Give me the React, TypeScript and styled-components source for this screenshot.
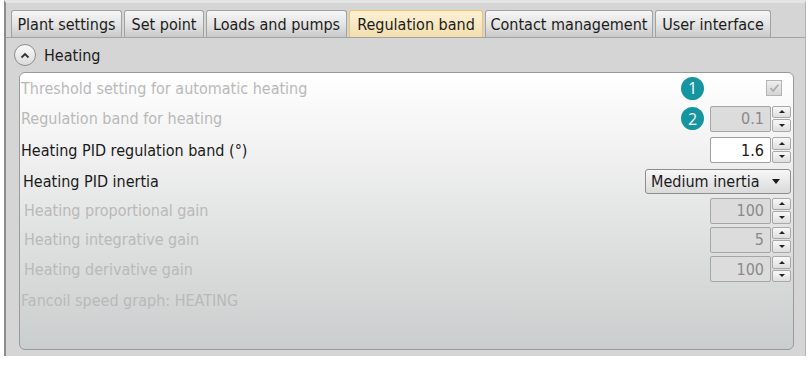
import React from 'react'
import styled, { createGlobalStyle } from 'styled-components'

const Global = createGlobalStyle`
  html, body { margin: 0; padding: 0; background: #ffffff; }
  body { font-family: "DejaVu Sans Condensed", "DejaVu Sans", "Liberation Sans", sans-serif; }
`

const Window = styled.div`
  margin-left: 4px;
  width: 799px;
  height: 353px;
  border-top: 3px solid #e4e4e4;
  border-left: 2px solid #8c8c8c;
  border-right: 1px solid #b4b4b4;
  background: #d5d5d5;
  display: flex;
  flex-direction: column;
`

const TabStrip = styled.div`
  display: flex;
  gap: 2px;
  padding: 7px 0 0 5px;
  height: 27px;
  border-bottom: 1px solid #a3a3a3;
`

const Tab = styled.div<{ $w: number; $active?: boolean }>`
  width: ${p => p.$w}px;
  box-sizing: border-box;
  height: 27px;
  border: 1px solid ${p => (p.$active ? '#efc465' : '#a2a2a2')};
  border-bottom: none;
  border-radius: 3px 3px 0 0;
  background: ${p =>
    p.$active
      ? 'linear-gradient(#fcf1d6, #f3dfae)'
      : 'linear-gradient(#f7f7f7, #e2e2e2 55%, #c9c9c9)'};
  font-size: 16px;
  color: #1c1c1c;
  display: flex;
  align-items: center;
  justify-content: center;
  white-space: nowrap;
`

const Header = styled.div`
  height: 34px;
  display: flex;
  align-items: center;
  padding-left: 8px;
  gap: 8px;
  font-size: 16px;
  color: #1c1c1c;
`

const Collapse = styled.div`
  width: 20px;
  height: 20px;
  border-radius: 50%;
  border: 1px solid #8e8e8e;
  background: linear-gradient(#fafafa, #dcdcdc);
  display: flex;
  align-items: center;
  justify-content: center;
`

const Panel = styled.div`
  margin: 0 11px 6px 13px;
  flex: 1;
  border: 1px solid #9a9a9a;
  border-radius: 6px;
  background: linear-gradient(#ffffff, #f3f3f3 25%, #e2e3e3 55%, #cbcece);
  padding: 0 2px 0 1px;
  display: flex;
  flex-direction: column;
`

const Row = styled.div<{ $h: number }>`
  height: ${p => p.$h}px;
  display: flex;
  align-items: center;
`

const Label = styled.div<{ $on?: boolean; $indent?: number }>`
  flex: 1;
  font-size: 16px;
  padding-left: ${p => p.$indent ?? 0}px;
  color: ${p => (p.$on ? '#1a1a1a' : '#b9b9b9')};
  white-space: nowrap;
`

const Badge = styled.div`
  width: 23px;
  height: 23px;
  border-radius: 50%;
  background: #1495a0;
  color: #ffffff;
  font-family: "Open Sans", "DejaVu Sans", sans-serif;
  font-size: 16px;
  display: flex;
  align-items: center;
  justify-content: center;
  margin-right: 6px;
`

const Control = styled.div`
  width: 81px;
  display: flex;
  justify-content: flex-end;
`

const Check = styled.div`
  width: 14px;
  height: 14px;
  border: 1px solid #b4b4b4;
  background: linear-gradient(#eeeeee, #d4d4d4);
  margin-right: 9px;
  display: flex;
  align-items: center;
  justify-content: center;
`

const Spin = styled.div`
  display: flex;
  gap: 1px;
  width: 81px;
  height: 26px;
`

const SpinText = styled.div<{ $on?: boolean }>`
  flex: 1;
  box-sizing: border-box;
  border: 1px solid ${p => (p.$on ? '#a0a0a0' : '#a6a6a6')};
  border-radius: 2px;
  background: ${p => (p.$on ? '#ffffff' : '#dcdcdc')};
  color: ${p => (p.$on ? '#1a1a1a' : '#8a8a8a')};
  font-size: 16px;
  display: flex;
  align-items: center;
  justify-content: flex-end;
  padding-right: 6px;
`

const SpinBtns = styled.div`
  width: 19px;
  display: flex;
  flex-direction: column;
  gap: 1px;
`

const SpinBtn = styled.div`
  flex: 1;
  border: 1px solid #a9a9a9;
  border-radius: 2px;
  background: linear-gradient(#f8f8f8, #dedede);
  display: flex;
  align-items: center;
  justify-content: center;
`

const Arrow = styled.div<{ $up?: boolean }>`
  width: 0;
  height: 0;
  border-left: 3px solid transparent;
  border-right: 3px solid transparent;
  ${p => (p.$up ? 'border-bottom: 3px solid #222;' : 'border-top: 3px solid #222;')}
`

const Select = styled.div`
  width: 146px;
  height: 25px;
  box-sizing: border-box;
  border: 1px solid #8e8e8e;
  border-radius: 3px;
  background: linear-gradient(#f7f7f7, #dadada);
  font-size: 16px;
  color: #1a1a1a;
  display: flex;
  align-items: center;
  justify-content: space-between;
  padding: 0 10px 0 5px;
  margin-left: auto;
`

const SelectArrow = styled.div`
  width: 0;
  height: 0;
  border-left: 4px solid transparent;
  border-right: 4px solid transparent;
  border-top: 5px solid #1a1a1a;
`

function SpinBox({ value, on }: { value: string; on?: boolean }) {
  return (
    <Spin>
      <SpinText $on={on}>{value}</SpinText>
      <SpinBtns>
        <SpinBtn><Arrow $up /></SpinBtn>
        <SpinBtn><Arrow /></SpinBtn>
      </SpinBtns>
    </Spin>
  )
}

const tabs = [
  { t: 'Plant settings', w: 111 },
  { t: 'Set point', w: 80 },
  { t: 'Loads and pumps', w: 141 },
  { t: 'Regulation band', w: 134, a: true },
  { t: 'Contact management', w: 168 },
  { t: 'User interface', w: 116 },
]

export default function App() {
  return (
    <>
      <Global />
      <Window>
        <TabStrip>
          {tabs.map(x => (
            <Tab key={x.t} $w={x.w} $active={x.a}>{x.t}</Tab>
          ))}
        </TabStrip>
        <Header>
          <Collapse>
            <svg width="10" height="7" viewBox="0 0 10 7">
              <path d="M1.5 5.5 L5 2 L8.5 5.5" fill="none" stroke="#333" strokeWidth="1.8" />
            </svg>
          </Collapse>
          Heating
        </Header>
        <Panel>
          <Row $h={30}>
            <Label>Threshold setting for automatic heating</Label>
            <Badge>1</Badge>
            <Control>
              <Check>
                <svg width="11" height="10" viewBox="0 0 11 10">
                  <path d="M1.5 5 L4.2 8 L9.5 1.5" fill="none" stroke="#a9a9a9" strokeWidth="1.6" />
                </svg>
              </Check>
            </Control>
          </Row>
          <Row $h={31}>
            <Label>Regulation band for heating</Label>
            <Badge>2</Badge>
            <Control><SpinBox value="0.1" /></Control>
          </Row>
          <Row $h={32}>
            <Label $on>Heating PID regulation band (°)</Label>
            <Control><SpinBox value="1.6" on /></Control>
          </Row>
          <Row $h={30}>
            <Label $on $indent={2}>Heating PID inertia</Label>
            <Select>
              Medium inertia
              <SelectArrow />
            </Select>
          </Row>
          <Row $h={29}>
            <Label $indent={3}>Heating proportional gain</Label>
            <Control><SpinBox value="100" /></Control>
          </Row>
          <Row $h={29}>
            <Label $indent={3}>Heating integrative gain</Label>
            <Control><SpinBox value="5" /></Control>
          </Row>
          <Row $h={30}>
            <Label $indent={3}>Heating derivative gain</Label>
            <Control><SpinBox value="100" /></Control>
          </Row>
          <Row $h={32}>
            <Label>Fancoil speed graph: HEATING</Label>
          </Row>
        </Panel>
      </Window>
    </>
  )
}
